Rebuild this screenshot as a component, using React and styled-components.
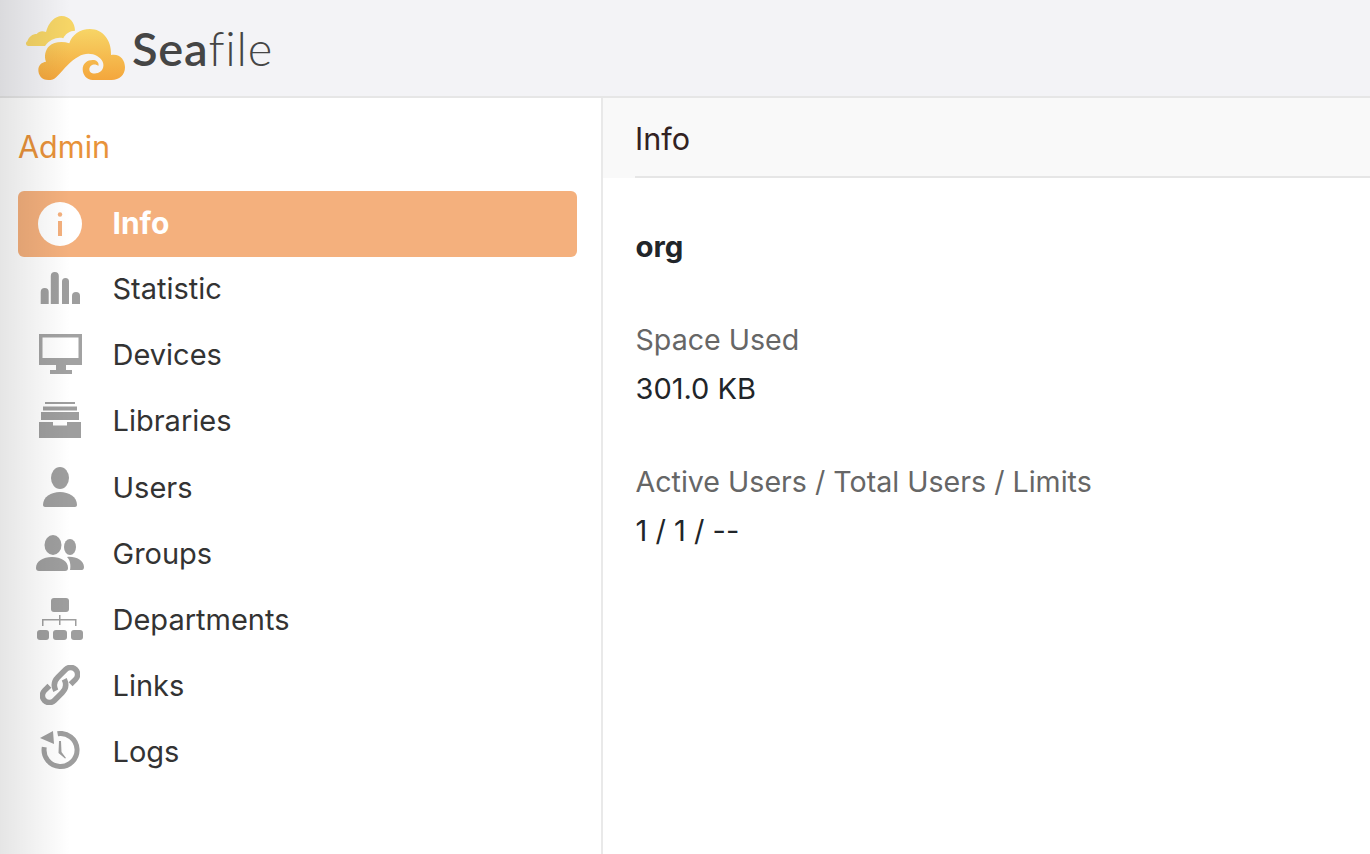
import React from 'react'
import styled, { createGlobalStyle } from 'styled-components'

const GlobalStyle = createGlobalStyle`
    html, body {
        margin: 0;
        padding: 0;
        background: #ffffff;
    }
    body {
        font-family: Inter, "Liberation Sans", sans-serif;
    }
`

const Page = styled.div`
    position: relative;
    width: 1370px;
    height: 854px;
    overflow: hidden;
    display: flex;
    flex-direction: column;
`
const EdgeShade = styled.div`
    position: absolute;
    left: 0;
    top: 0;
    bottom: 0;
    width: 70px;
    background: linear-gradient(to right, rgba(0, 0, 0, 0.1), rgba(0, 0, 0, 0));
    pointer-events: none;
`
const Header = styled.header`
    height: 96px;
    flex: none;
    background: #f3f3f6;
    border-bottom: 2px solid #e6e6e6;
    display: flex;
    align-items: center;
    padding-left: 20px;
    gap: 4px;
    svg {
        margin-top: -2px;
    }
`
const LogoText = styled.div`
    font-family: Lato, sans-serif;
    font-size: 47px;
    font-weight: 300;
    letter-spacing: 0.8px;
    color: #454545;
    line-height: 1;
    b {
        font-weight: 600;
    }
`
const Body = styled.div`
    flex: 1;
    display: flex;
    min-height: 0;
`
const Sidebar = styled.aside`
    width: 603px;
    flex: none;
    box-sizing: border-box;
    border-right: 2px solid #e9e9e9;
    padding: 0 24px 0 18px;
`
const SideTitle = styled.h3`
    margin: 0;
    height: 93px;
    box-sizing: border-box;
    padding-top: 4px;
    display: flex;
    align-items: center;
    font-size: 30.6px;
    font-weight: 400;
    color: #e8923a;
`
const NavList = styled.nav`
    display: flex;
    flex-direction: column;
`
const NavItem = styled.a`
    height: 66.125px;
    box-sizing: border-box;
    padding-bottom: 3px;
    display: flex;
    align-items: center;
    border-radius: 6px;
    color: ${p => (p.$active ? '#ffffff' : '#333333')};
    background: ${p => (p.$active ? '#f4b07d' : 'transparent')};
    font-size: ${p => (p.$active ? '30px' : '29px')};
    font-weight: ${p => (p.$active ? 700 : 400)};
`
const IconSlot = styled.span`
    width: 94.5px;
    flex: none;
    display: flex;
    justify-content: center;
    padding-right: 10.5px;
    box-sizing: border-box;
    margin-top: ${p => (p.$active ? '3px' : '-1px')};
    svg {
        display: block;
    }
`
const Main = styled.main`
    flex: 1;
    min-width: 0;
`
const TopBar = styled.div`
    height: 80px;
    box-sizing: border-box;
    padding-left: 32px;
    background: #f9f9f9;
`
const TopBarInner = styled.div`
    height: 80px;
    box-sizing: border-box;
    padding-top: 3px;
    border-bottom: 2px solid #e6e6e6;
    display: flex;
    align-items: center;
    font-size: 30.6px;
    color: #322222;
`
const Content = styled.div`
    padding: 47px 32.5px 0;
    color: #212529;
`
const OrgName = styled.h3`
    margin: 0 0 46px;
    font-size: 29.4px;
    line-height: 44px;
    font-weight: 700;
`
const Field = styled.dl`
    margin: 0 0 44px;
`
const FieldLabel = styled.dt`
    font-size: 28.6px;
    line-height: 49px;
    color: #666666;
    font-weight: 400;
`
const FieldValue = styled.dd`
    margin: 0;
    font-size: 29px;
    line-height: 49px;
`

const Logo = () => (
    <svg width="108" height="75" viewBox="0 0 324 225">
        <defs>
            <linearGradient id="logoFill" x1="0" y1="0" x2="0" y2="1">
                <stop offset="0" stopColor="#f7d566" />
                <stop offset="1" stopColor="#f4a63c" />
            </linearGradient>
        </defs>
        <path
            fill="#f6d566"
            d="M25 108C18 108 15 98 22 94C26 80 38 72 50 72C58 62 68 62 78 66C85 38 105 18 125 18C148 18 165 38 165 62C150 62 135 72 130 85C112 80 90 88 75 108Z"
        />
        <path
            fill="url(#logoFill)"
            d="M85 210C65 210 55 195 55 180C55 165 65 157 78 155C72 140 75 120 88 108C100 97 125 92 148 100C155 75 180 57 210 57C248 57 275 90 273 135C300 130 315 150 315 172C315 195 298 210 275 210L218 210C200 210 188 195 188 178C188 158 205 148 222 150C232 152 238 160 235 168C225 158 208 165 208 178C208 190 220 192 228 190C245 188 255 172 248 155C238 135 205 122 175 140C150 152 135 175 110 200C102 208 95 210 85 210Z"
        />
    </svg>
)

const InfoIcon = () => (
    <svg width="44" height="44" viewBox="0 0 44 44">
        <circle cx="22" cy="22" r="22" fill="#ffffff" />
        <circle cx="22" cy="12.5" r="2.2" fill="#f4b07d" />
        <rect x="20" y="19" width="4" height="15" fill="#f4b07d" />
    </svg>
)
const StatIcon = () => (
    <svg width="40" height="32" viewBox="0 0 40 32" fill="#9e9e9e">
        <path d="M0.7 32V20a4 4 0 0 1 8 0v12z" />
        <path d="M10.8 32V4a4 4 0 0 1 8 0v28z" />
        <path d="M22 32V9.5a3.5 3.5 0 0 1 7 0v22.5z" />
        <path d="M32 32V24a4 4 0 0 1 8 0v8z" />
    </svg>
)
const DeviceIcon = () => (
    <svg width="43" height="40" viewBox="0 0 43 40" fill="#a2a2a2">
        <path fillRule="evenodd" d="M0 0h43v31H27v5h6v4H11v-4h6v-5H0zM3.5 3.5v20.5h36V3.5z" />
    </svg>
)
const LibraryIcon = () => (
    <svg width="42" height="36" viewBox="0 0 42 36" fill="#9e9e9e">
        <rect x="6" y="0" width="30" height="2" />
        <rect x="4" y="4.5" width="34" height="4" />
        <rect x="2" y="10" width="38" height="8" />
        <path d="M0 20h14v3.5h14V20h14v16H0z" />
    </svg>
)
const UserIcon = () => (
    <svg width="36" height="40" viewBox="0 0 36 40" fill="#9e9e9e">
        <ellipse cx="18" cy="11" rx="9" ry="11" />
        <path d="M1 38c0-8 8-13 17-13s17 5 17 13c0 1-1 2-2 2H3c-1 0-2-1-2-2z" />
    </svg>
)
const GroupIcon = () => (
    <svg width="48" height="36" viewBox="0 0 48 36" fill="#9e9e9e">
        <ellipse cx="17" cy="10" rx="8.5" ry="10" />
        <ellipse cx="34" cy="12" rx="6" ry="8" />
        <path d="M0 33c0-7 7-11 16-11s16 4 16 11c0 2-1 3-3 3H3c-2 0-3-1-3-3z" />
        <path d="M31 22c8-1 17 3 17 10 0 2-1 3-2 3H34c1-5 0-10-3-13z" />
    </svg>
)
const DepartmentIcon = () => (
    <svg width="46" height="42" viewBox="0 0 46 42" fill="#9e9e9e">
        <rect x="14" y="0" width="18" height="14" rx="3" />
        <rect x="5" y="21" width="34" height="1.5" />
        <rect x="22" y="17" width="1.5" height="10" />
        <rect x="5" y="21" width="1.5" height="7" />
        <rect x="38" y="21" width="1.5" height="7" />
        <rect x="0" y="32" width="12" height="10" rx="3" />
        <rect x="16" y="32" width="14" height="10" rx="3" />
        <rect x="34" y="32" width="12" height="10" rx="3" />
    </svg>
)
const LinkIcon = () => (
    <svg width="40" height="40" viewBox="0 0 40 40" fill="none" stroke="#9e9e9e" strokeWidth="5.5">
        <g transform="rotate(-45 20 20)">
            <path d="M13 21C15 15 19 13 24 13H35a7 7 0 0 1 0 14H28" />
            <path d="M27 19C25 25 21 27 16 27H5a7 7 0 0 1 0-14H12" />
        </g>
    </svg>
)
const LogIcon = () => (
    <svg width="40" height="40" viewBox="0 0 40 40" fill="#9e9e9e">
        <path d="M17.6 2.75A16.5 16.5 0 1 1 4.3 16.1" fill="none" stroke="#9e9e9e" strokeWidth="5" />
        <path d="M0 7L13 0L14 13z" />
        <path d="M19 10h2l.5 11 4.5 6-1 .5-6.5-5.5z" />
    </svg>
)

const items = [
    { label: 'Info', Icon: InfoIcon, active: true },
    { label: 'Statistic', Icon: StatIcon },
    { label: 'Devices', Icon: DeviceIcon },
    { label: 'Libraries', Icon: LibraryIcon },
    { label: 'Users', Icon: UserIcon },
    { label: 'Groups', Icon: GroupIcon },
    { label: 'Departments', Icon: DepartmentIcon },
    { label: 'Links', Icon: LinkIcon },
    { label: 'Logs', Icon: LogIcon },
]

export default function App() {
    return (
        <Page>
            <GlobalStyle />
            <Header>
                <Logo />
                <LogoText>
                    <b>Sea</b>file
                </LogoText>
            </Header>
            <Body>
                <Sidebar>
                    <SideTitle>Admin</SideTitle>
                    <NavList>
                        {items.map(({ label, Icon, active }) => (
                            <NavItem key={label} $active={active}>
                                <IconSlot $active={active}>
                                    <Icon />
                                </IconSlot>
                                {label}
                            </NavItem>
                        ))}
                    </NavList>
                </Sidebar>
                <Main>
                    <TopBar>
                        <TopBarInner>Info</TopBarInner>
                    </TopBar>
                    <Content>
                        <OrgName>org</OrgName>
                        <Field>
                            <FieldLabel>Space Used</FieldLabel>
                            <FieldValue>301.0 KB</FieldValue>
                        </Field>
                        <Field>
                            <FieldLabel>Active Users / Total Users / Limits</FieldLabel>
                            <FieldValue>1 / 1 / --</FieldValue>
                        </Field>
                    </Content>
                </Main>
            </Body>
            <EdgeShade />
        </Page>
    )
}
